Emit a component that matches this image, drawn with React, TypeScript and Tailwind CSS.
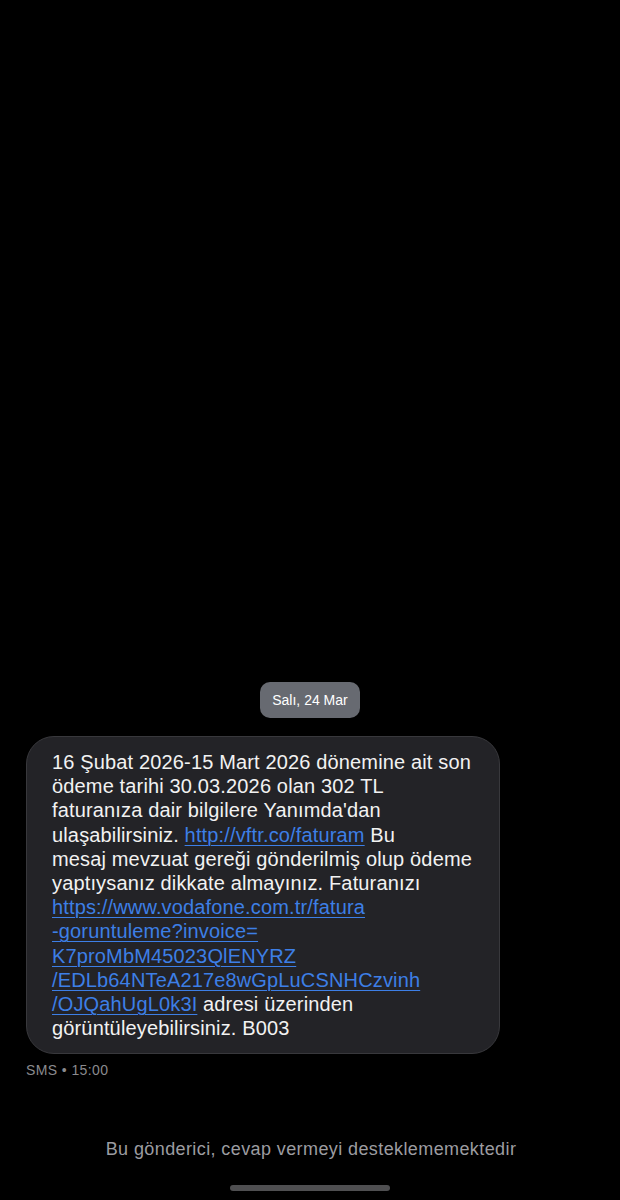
import React from "react";

const Link = ({ children }: { children: React.ReactNode }) => (
  <span className="text-[#3d7fe6] underline decoration-1 underline-offset-[3px]">{children}</span>
);

export default function App() {
  const lines: React.ReactNode[] = [
    "16 Şubat 2026-15 Mart 2026 dönemine ait son",
    "ödeme tarihi 30.03.2026 olan 302 TL",
    "faturanıza dair bilgilere Yanımda'dan",
    <>ulaşabilirsiniz. <Link>http://vftr.co/faturam</Link> Bu</>,
    "mesaj mevzuat gereği gönderilmiş olup ödeme",
    "yaptıysanız dikkate almayınız. Faturanızı",
    <Link>https://www.vodafone.com.tr/fatura</Link>,
    <Link>-goruntuleme?invoice=</Link>,
    <Link>K7proMbM45023QlENYRZ</Link>,
    <Link>/EDLb64NTeA217e8wGpLuCSNHCzvinh</Link>,
    <><Link>/OJQahUgL0k3I</Link> adresi üzerinden</>,
    "görüntüleyebilirsiniz. B003",
  ];
  return (
    <div
      className="w-[620px] h-[1200px] bg-black flex flex-col pt-[682px] overflow-hidden"
      style={{ fontFamily: '"Liberation Sans", Arial, sans-serif' }}
    >
      <div className="flex justify-center">
        <div className="h-[36px] w-[100px] rounded-[10px] bg-[#676a71] flex items-center justify-center text-[14px] text-white">
          Salı, 24 Mar
        </div>
      </div>
      <div className="ml-[26px] mt-[18px] w-[474px] h-[318px] rounded-[28px] bg-[#232327] border border-[#38383c] pl-[25px] pt-[13px] text-[20px] tracking-[0.15px] leading-[24.2px] text-[#f2f2f2]">
        {lines.map((l, i) => (
          <div key={i} className="whitespace-nowrap">
            {l}
          </div>
        ))}
      </div>
      <div className="ml-[26px] mt-[8px] text-[14px] tracking-[0.4px] leading-[16px] text-[#8a8a8e]">SMS • 15:00</div>
      <div className="mt-[60px] text-center text-[18px] tracking-[0.4px] leading-[22px] text-[#9c9ca0] pl-[2px]">
        Bu gönderici, cevap vermeyi desteklememektedir
      </div>
      <div className="flex justify-center mt-[25px]">
        <div className="w-[160px] h-[6px] rounded-full bg-[#4f4f51]" />
      </div>
    </div>
  );
}
